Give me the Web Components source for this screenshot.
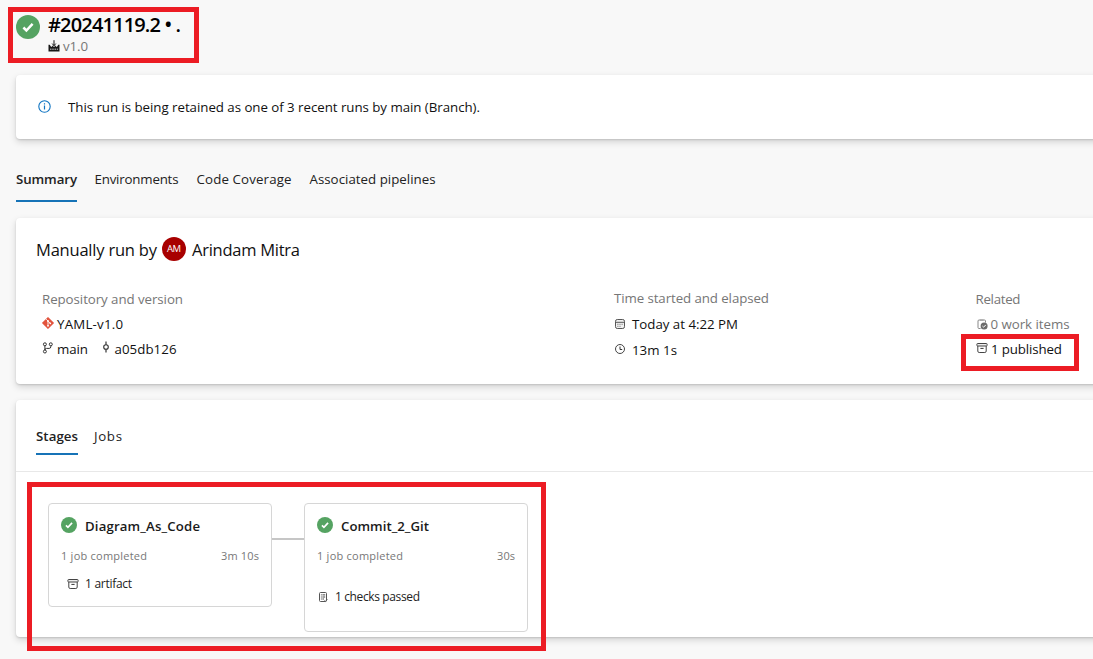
<!DOCTYPE html>
<html lang="en">
<head>
<meta charset="utf-8">
<title>Pipeline run</title>
<style>
html,body{margin:0;height:100%;overflow:hidden;background:#f8f8f8}
</style>
</head>
<body>
<run-page></run-page>
<script>
const define = (name, html, extra) => {
  const t = document.createElement('template');
  t.innerHTML = html;
  customElements.define(name, class extends HTMLElement {
    connectedCallback() {
      if (this.shadowRoot) return;
      this.attachShadow({mode: 'open'}).appendChild(t.content.cloneNode(true));
      if (extra) extra(this, this.shadowRoot);
    }
  });
};

/* Single line of text, tracked to occupy the width given in "w". */
define('fit-text', `<style>
:host{display:block;white-space:nowrap;flex:none;line-height:20px}
span{display:inline-block}
</style><span><slot></slot></span>`, (host, root) => {
  const w = +host.getAttribute('w');
  const s = root.querySelector('span');
  const n = host.textContent.length;
  if (w) {
    s.style.letterSpacing = ((w - s.getBoundingClientRect().width) / (n - 1)) + 'px';
    host.style.width = w + 'px';
  }
});

const ICONS = {
  check: [24, '<circle cx="12" cy="12" r="12" fill="#55a362"/><path d="M7.4 12.5l3 3 6.2-6.7" fill="none" stroke="#fff" stroke-width="2.5"/>'],
  info: [13, '<circle cx="6.5" cy="6.5" r="5.7" fill="none" stroke="#0f74c2" stroke-width="1.1"/><path d="M6.5 5.6v4M6.5 3.2v1.3" stroke="#0f74c2" stroke-width="1.2"/>'],
  factory: [12, '<path d="M.5 11.5V4.8h1.2l1.3 2h1V5.3l1.2 1.5h1.6L8 5.3v1.5h1l1.3-2h1.2v6.7z" fill="#171717"/><path d="M6 .2v6.3M4.2 3.6L6 5.6l1.8-2" fill="none" stroke="#171717"/><path d="M2.2 9.2h1.2M4.4 9.2h1.2M6.6 9.2h1.2M8.8 9.2h1" stroke="#f8f8f8"/>'],
  git: [12, '<path d="M6 .2L11.8 6 6 11.8.2 6z" fill="#e2533c" stroke="#e2533c" stroke-width=".5" stroke-linejoin="round"/><path d="M4.2 2.2L6 4v5M6 4.2l2.3 2.2" fill="none" stroke="#fff" stroke-width=".9"/><circle cx="6" cy="4" r=".9" fill="#fff"/><circle cx="6" cy="8.8" r=".9" fill="#fff"/><circle cx="8.3" cy="6.3" r=".9" fill="#fff"/>'],
  branch: [12, '<g fill="none" stroke="#333"><circle cx="2.9" cy="2.3" r="1.5"/><circle cx="8.8" cy="2.3" r="1.5"/><circle cx="2.9" cy="9.5" r="1.5"/><path d="M2.9 3.8V8M8.8 3.8v1q0 1.6-1.6 1.6H4.5Q2.9 6.4 2.9 8"/></g>'],
  commit: [12, '<circle cx="6" cy="6" r="2.3" fill="none" stroke="#333" stroke-width="1.1"/><path d="M6 .5v3.2M6 8.3v3.2" stroke="#333" stroke-width="1.2"/>'],
  calendar: [12, '<rect x="1.5" y="1.5" width="9" height="9" rx="1.8" fill="#f0f0f0" stroke="#555"/><path d="M1.5 4.3h9" stroke="#555"/><path d="M3.4 6.3h1M5.5 6.3h1M7.6 6.3h1M3.4 8.3h1M5.5 8.3h1" stroke="#666"/>'],
  clock: [12, '<circle cx="6" cy="6" r="4.5" fill="none" stroke="#444"/><path d="M6 3.5v3h2.2" fill="none" stroke="#333"/>'],
  work: [12, '<path d="M4.6 10.5H3q-1 0-1-1V3q0-1 1-1h5.5q1 0 1 1v1.6" fill="none" stroke="#888"/><path d="M4 1.4h3.6v1.5H4z" fill="#aaa"/><circle cx="8.1" cy="8" r="3.5" fill="#6b6b6b"/><path d="M6.4 8l1.2 1.2 2.2-2.3" fill="none" stroke="#fff"/>'],
  archive: [12, '<rect x=".9" y="1.5" width="10.2" height="2.5" rx=".7" fill="#eee" stroke="#444"/><path d="M1.8 4v5.1q0 1.4 1.4 1.4h5.6q1.4 0 1.4-1.4V4" fill="none" stroke="#444"/><path d="M4.4 6.4h3.2" stroke="#333"/>'],
  checks: [12, '<path d="M2.5 9.5v-7q0-1 1-1h5q1 0 1 1v7q0 1-1 1h-5q-1 0-1-1z" fill="none" stroke="#555"/><path d="M3.9 3.9h.9M5.4 3.9h2.8M3.9 6h.9M5.4 6h2.8M3.9 8h.9M5.4 8h1.6" stroke="#444"/><path d="M7 9.6l1.1 1 2.2-2.2" fill="none" stroke="#555"/>']
};
define('ui-icon', `<style>:host{display:block;flex:none}svg{display:block}</style><div></div>`, (host, root) => {
  const [vb, body] = ICONS[host.getAttribute('name')];
  const s = host.getAttribute('size') || vb;
  root.querySelector('div').innerHTML = `<svg width="${s}" height="${s}" viewBox="0 0 ${vb} ${vb}">${body}</svg>`;
});

define('ui-card', `<style>
:host{display:block;box-sizing:border-box;flex:none;margin-left:16px;margin-right:-20px;background:#fff;border-radius:4px;
box-shadow:0 3px 7px rgba(0,0,0,.15),0 1px 2px rgba(0,0,0,.13)}
</style><slot></slot>`);

define('ui-tab', `<style>
:host{display:block;box-sizing:border-box;color:#222}
:host([active]){font-weight:600;border-bottom:2px solid #1673b7}
</style><slot></slot>`);

define('mark-box', `<style>
:host{position:absolute;box-sizing:border-box;border:5px solid #ec1c24;pointer-events:none}
</style>`);

define('meta-row', `<style>
:host{display:flex;align-items:center;height:20px;color:#111}
:host([muted]){color:#767676}
</style><slot></slot>`);

define('stage-card', `<style>
:host{display:block;box-sizing:border-box;width:224px;flex:none;background:#fff;border:1px solid #d6d6d6;border-radius:4px;padding:11px 12px 0}
.head{display:flex;align-items:center;gap:8px;height:21px;font-weight:600;font-size:13.2px;color:#1a1a1a}
.head ui-icon{margin-top:-2px}
.info{display:flex;justify-content:space-between;margin-top:10px;color:#777;font-size:11px;height:20px}
.foot{display:flex;align-items:center;color:#222;font-size:12px}
</style>
<div class="head"><ui-icon name="check" size="16"></ui-icon><slot name="title"></slot></div>
<div class="info"><slot name="jobs"></slot><slot name="time"></slot></div>
<div class="foot"><slot></slot></div>`);

define('run-page', `<style>
:host{display:flex;flex-direction:column;position:relative;width:1093px;height:659px;overflow:hidden;background:#f8f8f8;
font:13.3px "Open Sans","Noto Sans",sans-serif;color:#111}
header{display:flex;height:75px;padding:15px 0 0 16px;gap:8px;box-sizing:border-box;flex:none}
header .t{font-size:20px;font-weight:600;color:#000}
header .sub{display:flex;align-items:center;gap:3px;color:#767676;margin-top:1px}
.banner{height:64px;display:flex;align-items:center;padding-left:22px;gap:18px}
.tabs{display:flex;flex:none}
.tabs.main{height:33px;margin:30px 0 16px 16px;gap:18px}
.tabs.main ui-tab{height:33px}
.tabs.main ui-tab:not([active]){margin-left:-.5px;margin-right:.5px}
.by{display:flex;align-items:center;font-size:16.5px;height:24px;padding:19px 0 0 20px}
.by>fit-text{padding-top:2px}
.av{width:24px;height:24px;border-radius:50%;background:#a80000;color:#fff;font-size:9.5px;display:flex;align-items:center;justify-content:center;margin:0 6px 0 5px}
.grid{display:grid;grid-template-columns:572px 361.5px 1fr;padding:28px 0 0 26px}
.col{display:flex;flex-direction:column;gap:5px}
.tabs.inner{height:72px;box-sizing:border-box;padding:26px 0 0 20px;gap:16px;border-bottom:1px solid #e8e8e8}
.tabs.inner ui-tab{height:29px}
.flow{display:flex;align-items:flex-start;padding:31px 0 0 32px}
.link{width:32px;height:2px;background:#c6c6c6;margin-top:35px}
</style>
<header>
  <ui-icon name="check" size="24" style="margin-top:-.5px"></ui-icon>
  <div><fit-text class="t" w="133">#20241119.2 • .</fit-text>
  <div class="sub"><ui-icon name="factory"></ui-icon><fit-text w="25">v1.0</fit-text></div></div>
</header>
<ui-card style="height:64px"><div class="banner"><ui-icon name="info" style="margin:-1px .5px 0 -.5px"></ui-icon><fit-text w="412" style="margin-left:-1px">This run is being retained as one of 3 recent runs by main (Branch).</fit-text></div></ui-card>
<div class="tabs main">
  <ui-tab active><fit-text w="61">Summary</fit-text></ui-tab>
  <ui-tab><fit-text w="84">Environments</fit-text></ui-tab>
  <ui-tab><fit-text w="95">Code Coverage</fit-text></ui-tab>
  <ui-tab><fit-text w="126">Associated pipelines</fit-text></ui-tab>
</div>
<ui-card style="height:166px">
  <div class="by"><fit-text w="121">Manually run by</fit-text><div class="av"><fit-text w="14">AM</fit-text></div><fit-text w="108">Arindam Mitra</fit-text></div>
  <div class="grid">
    <div class="col">
      <meta-row muted><fit-text w="141">Repository and version</fit-text></meta-row>
      <meta-row><ui-icon name="git" style="margin:-2px 3px 0 0"></ui-icon><fit-text w="66">YAML-v1.0</fit-text></meta-row>
      <meta-row><ui-icon name="branch" style="margin:-3px 3px 0 0"></ui-icon><fit-text w="31">main</fit-text><ui-icon name="commit" style="margin:-4px 3px 0 11.5px"></ui-icon><fit-text w="62">a05db126</fit-text></meta-row>
    </div>
    <div class="col">
      <meta-row muted style="margin:-1px 0 1px"><fit-text w="155">Time started and elapsed</fit-text></meta-row>
      <meta-row><ui-icon name="calendar" style="margin:-1px 6px 0 0"></ui-icon><fit-text w="106">Today at 4:22 PM</fit-text></meta-row>
      <meta-row style="margin-top:1px"><ui-icon name="clock" style="margin:-2px 6px 0 0"></ui-icon><fit-text w="45">13m 1s</fit-text></meta-row>
    </div>
    <div class="col">
      <meta-row muted><fit-text w="45">Related</fit-text></meta-row>
      <meta-row muted><ui-icon name="work" style="margin:-1px 3px 0 0"></ui-icon><fit-text w="79">0 work items</fit-text></meta-row>
      <meta-row><ui-icon name="archive" style="margin:-3px 3.5px 0 0"></ui-icon><fit-text w="71">1 published</fit-text></meta-row>
    </div>
  </div>
</ui-card>
<ui-card style="height:237px;margin-top:16px">
  <div class="tabs inner">
    <ui-tab active><fit-text w="42">Stages</fit-text></ui-tab>
    <ui-tab><fit-text w="28">Jobs</fit-text></ui-tab>
  </div>
  <div class="flow">
    <stage-card style="height:104px">
      <fit-text slot="title" w="115">Diagram_As_Code</fit-text><fit-text slot="jobs" w="86">1 job completed</fit-text><fit-text slot="time" w="38">3m 10s</fit-text>
      <ui-icon name="archive" style="margin:7px 6px 0 6px"></ui-icon><fit-text w="47" style="margin-top:8px">1 artifact</fit-text>
    </stage-card>
    <div class="link"></div>
    <stage-card style="height:129px">
      <fit-text slot="title" w="88">Commit_2_Git</fit-text><fit-text slot="jobs" w="86">1 job completed</fit-text><fit-text slot="time" w="18">30s</fit-text>
      <ui-icon name="checks" style="margin:20px 6px 0 0"></ui-icon><fit-text w="85" style="margin-top:21px">1 checks passed</fit-text>
    </stage-card>
  </div>
</ui-card>
<mark-box style="left:8px;top:7px;width:191px;height:56px"></mark-box>
<mark-box style="left:961px;top:334px;width:118px;height:37px"></mark-box>
<mark-box style="left:27px;top:482px;width:519px;height:169px"></mark-box>`);
</script>
</body>
</html>
